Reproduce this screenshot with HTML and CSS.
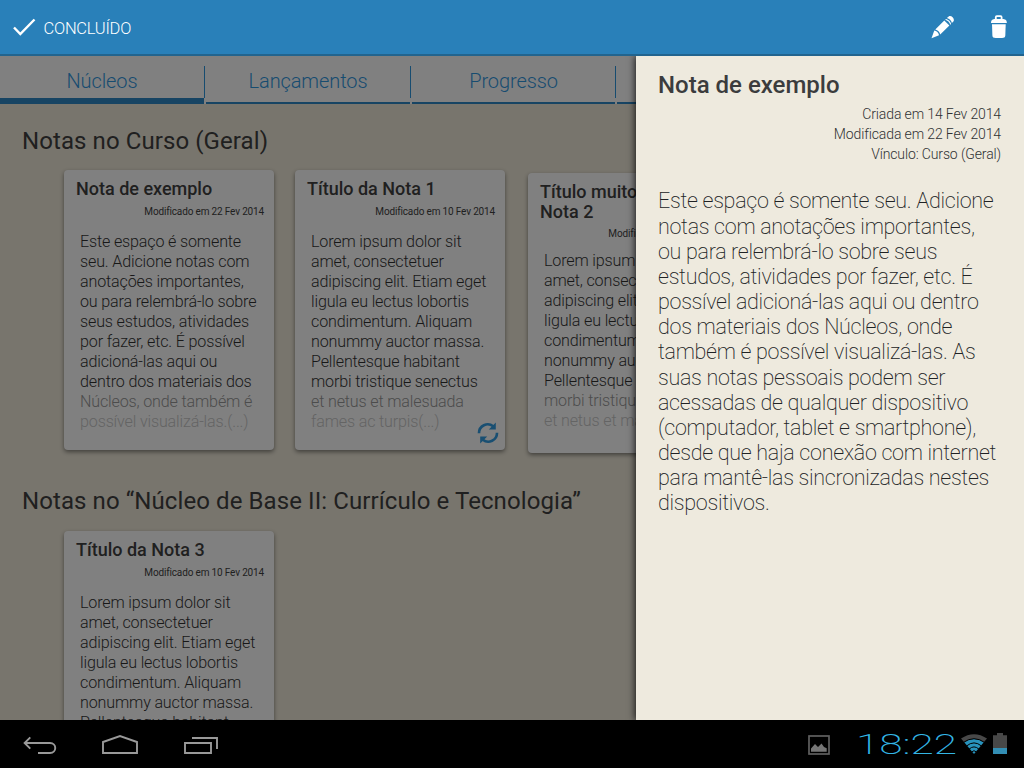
FILE: index.html
```
<!DOCTYPE html>
<html lang="pt-BR">
<head>
<meta charset="utf-8">
<title>Notas</title>
<link rel="stylesheet" href="styles.css">
</head>
<body>
<div class="screen">
  <header class="topbar">
    <svg class="check" width="24" height="20" viewBox="0 0 24 20"><path d="M2 10.5 8.3 17 22.5 2.5" fill="none" stroke="#fff" stroke-width="2.4"/></svg>
    <span class="done">CONCLUÍDO</span>
    <svg class="pencil" width="24" height="24" viewBox="0 0 24 24"><g fill="#fff"><path d="M.5 23.3 3.3 15.6C5.5 15.8 7.7 18 8 20.3Z"/><path d="M4.3 14.5 13.3 5.6 18.4 10.6 9.2 19.5C8.8 17.3 6.7 14.9 4.3 14.5Z"/><path d="M14.1 4.8 15.1 3.9C17.5 4.4 19.6 6.5 20.1 8.9L19.2 9.8C18.7 7.4 16.6 5.3 14.1 4.8Z"/><path d="M15.9 3.1 17.7 1.4C20-.2 24 3.5 22.6 6.3L20.9 8.1C20.4 5.7 18.3 3.6 15.9 3.1Z"/></g></svg>
    <svg class="trash" width="18" height="24" viewBox="0 0 18 24"><path d="M5.8 4V2.2Q5.8 1.2 6.8 1.2H10.6Q11.6 1.2 11.6 2.2V4" fill="none" stroke="#fff" stroke-width="1.8"/><path d="M1 7.9C1 4.9 3 4 5 4H12.5C15 4 16.8 4.8 16.8 7.9Z" fill="#fff"/><path d="M2 9.3H15.7L15.3 20.5C15.2 22.3 14 23 12 23H5.7C3.5 23 2.5 22.3 2.4 20.5Z" fill="#fff"/></svg>
  </header>

  <div class="stage">
    <nav class="tabs">
      <div class="tab tab-active"><span>Núcleos</span></div>
      <div class="tab"><span>Lançamentos</span></div>
      <div class="tab tab-narrow"><span>Progresso</span></div>
      <div class="tab"></div>
      <div class="tab"></div>
    </nav>
    <main class="notes">
      <section class="group">
        <h2 class="heading">Notas no Curso (Geral)</h2>
        <div class="cards">
          <article class="card">
            <h3 class="card-title">Nota de exemplo</h3>
            <p class="card-date">Modificado em 22 Fev 2014</p>
            <p class="card-text">Este espaço é somente<br>seu. Adicione notas com<br>anotações importantes,<br>ou para relembrá-lo sobre<br>seus estudos, atividades<br>por fazer, etc. É possível<br>adicioná-las aqui ou<br>dentro dos materiais dos<br><span class="fade-1">Núcleos, onde também é</span><br><span class="fade-2">possível visualizá-las.(...)</span></p>
          </article>
          <article class="card">
            <h3 class="card-title">Título da Nota 1</h3>
            <p class="card-date">Modificado em 10 Fev 2014</p>
            <p class="card-text">Lorem ipsum dolor sit<br>amet, consectetuer<br>adipiscing elit. Etiam eget<br>ligula eu lectus lobortis<br>condimentum. Aliquam<br>nonummy auctor massa.<br>Pellentesque habitant<br>morbi tristique senectus<br><span class="fade-1">et netus et malesuada</span><br><span class="fade-2">fames ac turpis(...)</span></p>
            <svg class="sync" width="22" height="22" viewBox="0 0 22 22"><g fill="none" stroke="#194f72" stroke-width="2.6"><path d="M2 11.2A8.7 8.7 0 0 1 16.2 4.3"/><path d="M20 10.8A8.7 8.7 0 0 1 5.8 17.7"/></g><path d="M18.8.6V7.5H11.8ZM3.2 21.4V14.5H10.2Z" fill="#194f72"/></svg>
          </article>
          <article class="card card-long">
            <h3 class="card-title">Título muito<br>Nota 2</h3>
            <p class="card-date">Modificado em 10 Fev 2014</p>
            <p class="card-text">Lorem ipsum dolor sit<br>amet, consectetuer<br>adipiscing elit. Etiam eget<br>ligula eu lectus lobortis<br>condimentum. Aliquam<br>nonummy auctor massa.<br>Pellentesque habitant<br><span class="fade-1">morbi tristique senectus</span><br><span class="fade-2">et netus et malesuada</span></p>
          </article>
        </div>
      </section>
      <section class="group group-second">
        <h2 class="heading">Notas no “Núcleo de Base II: Currículo e Tecnologia”</h2>
        <div class="cards">
          <article class="card">
            <h3 class="card-title">Título da Nota 3</h3>
            <p class="card-date">Modificado em 10 Fev 2014</p>
            <p class="card-text">Lorem ipsum dolor sit<br>amet, consectetuer<br>adipiscing elit. Etiam eget<br>ligula eu lectus lobortis<br>condimentum. Aliquam<br>nonummy auctor massa.<br>Pellentesque habitant</p>
          </article>
        </div>
      </section>
    </main>
    <aside class="drawer">
      <h1 class="drawer-title">Nota de exemplo</h1>
      <p class="drawer-meta">Criada em 14 Fev 2014<br>Modificada em 22 Fev 2014<br>Vínculo: Curso (Geral)</p>
      <p class="drawer-text">Este espaço é somente seu. Adicione<br>notas com anotações importantes,<br>ou para relembrá-lo sobre seus<br>estudos, atividades por fazer, etc. É<br>possível adicioná-las aqui ou dentro<br>dos materiais dos Núcleos, onde<br>também é possível visualizá-las. As<br>suas notas pessoais podem ser<br>acessadas de qualquer dispositivo<br>(computador, tablet e smartphone),<br>desde que haja conexão com internet<br>para mantê-las sincronizadas nestes<br>dispositivos.</p>
    </aside>
  </div>

  <footer class="sysbar">
    <svg class="nav-icons" width="230" height="48" viewBox="0 0 230 48"><g fill="none" stroke="#999" stroke-width="1.9"><path d="M25 23H50C57 23 57 33 50 33H38M30.3 17.3 24.6 23 30.3 28.7"/><path d="M103 33V22L120 16 137 22V33Z"/><path d="M185 23H211V33H185ZM192 18H217V29"/></g></svg>
    <svg class="picture" width="22" height="20" viewBox="0 0 22 20"><rect x="1" y="1" width="20" height="18" fill="none" stroke="#606060" stroke-width="1.7"/><path d="M3 16.8V13.5L7 9 10 12 13.5 8.5 16 12 18.7 13.3V16.8Z" fill="#757575"/></svg>
    <span class="clock"><span class="clock-text">18:22</span></span>
    <svg class="wifi" width="26" height="20" viewBox="0 0 26 20"><path d="M0 4.5Q13-4 26 4.5L22.8 8.2Q13 2 3.2 8.2Z" fill="#484848"/><path d="M3.2 8.2Q13 2 22.8 8.2L13 20Z" fill="#2893bd"/><g fill="none" stroke="#000" stroke-width="1"><path d="M2 8.7Q13 .7 24 8.7M5.5 12Q13 5.8 20.5 12M8 15.2Q13 10.6 18 15.2M10.5 18Q13 15.4 15.5 18"/></g></svg>
    <svg class="battery" width="14" height="22" viewBox="0 0 14 22"><path d="M0 2.3H4V0H10V2.3H14V15H0Z" fill="#484848"/><path d="M0 15H14V21H0Z" fill="#338eb4"/></svg>
  </footer>
</div>
</body>
</html>
```
FILE: styles.css
```
* { box-sizing: border-box; }
body { margin: 0; font-family: Roboto, "Noto Sans", sans-serif; }
h1, h2, h3, p { margin: 0; }
svg { display: block; flex: none; }
.screen { display: flex; flex-direction: column; width: 1024px; height: 768px; overflow: hidden; }
.topbar { display: flex; align-items: center; height: 56px; padding: 0 16px 0 12px; background: #2980b9; border-bottom: 2px solid #22648e; flex: none; }
.done { margin-left: 7.5px; padding-top: 2px; color: #fff; font-size: 16.5px; font-weight: 300; letter-spacing: -0.25px; }
.pencil { margin-left: auto; }
.trash { margin-left: 35px; }
.stage { position: relative; flex: 1; min-height: 0; overflow: hidden; background: #78756d; }
.tabs { display: flex; gap: 2px; width: 1060px; height: 48px; background: #808080; }
.tab { position: relative; width: 204px; flex: none; height: 48px; padding-top: 10px; border-bottom: 2px solid #174463; text-align: center; color: #174c70; font-size: 20px; line-height: 30px; font-weight: 300; letter-spacing: -0.1px; }
.tab-narrow { width: 203px; }
.tab-active { border-bottom-width: 6px; }
.tab::after { content: ""; position: absolute; right: -1px; top: 10px; width: 1px; height: 32px; background: #174c70; }
.notes { padding: 21px 0 0 22px; }
.heading { color: #202020; font-size: 24px; line-height: 32px; font-weight: 400; letter-spacing: 0.09px; white-space: nowrap; }
.cards { display: flex; align-items: flex-start; gap: 21px; width: 800px; padding: 13px 0 0 42px; }
.group-second { padding-top: 32px; }
.group-second .cards { padding-top: 14px; }
.card { position: relative; flex: none; width: 210px; height: 280px; padding: 9px 10px 0 12px; border-radius: 4px; background: #808080; box-shadow: 0 2px 4px rgba(0, 0, 0, 0.45); white-space: nowrap; }
.card-long { margin: 3px 0 0 2px; }
.card-title { color: #202020; font-size: 18px; line-height: 20px; font-weight: 500; }
.card-date { padding-top: 6px; text-align: right; color: #202020; font-size: 10px; line-height: 14px; font-weight: 400; letter-spacing: -0.16px; }
.card-text { padding: 13px 0 0 4px; color: #181818; font-size: 16.1px; line-height: 20px; font-weight: 300; letter-spacing: -0.16px; }
.card-long .card-date { padding-top: 5px; }
.card-long .card-text { padding-top: 10px; }
.fade-1 { color: #4c4c4c; }
.fade-2 { color: #646464; }
.sync { position: absolute; right: 6px; bottom: 6px; }
.drawer { position: absolute; top: 0; right: 0; width: 388px; height: 664px; padding: 13px 23px 0 22px; background: #eeeade; box-shadow: -1px 0 7px rgba(0, 0, 0, 0.8); white-space: nowrap; }
.drawer-title { color: #3b3c3d; font-size: 24px; line-height: 32px; font-weight: 500; }
.drawer-meta { padding-top: 3px; color: #303234; text-align: right; font-size: 14px; line-height: 20px; font-weight: 300; letter-spacing: -0.12px; }
.drawer-text { padding-top: 24.4px; color: #202224; font-size: 21.5px; line-height: 25.17px; font-weight: 220; letter-spacing: -0.3px; }
.sysbar { display: flex; align-items: center; height: 48px; padding-right: 17px; background: #000; flex: none; }
.picture { margin-left: 578px; margin-top: 2px; }
.clock { width: 100px; margin-left: 26px; padding-top: 1px; }
.clock-text { display: inline-block; color: #33b5e5; font-size: 28px; line-height: 40px; font-weight: 200; transform: scaleX(1.51); transform-origin: left center; }
.wifi { margin-left: 5px; }
.battery { margin-left: 6px; }
```
